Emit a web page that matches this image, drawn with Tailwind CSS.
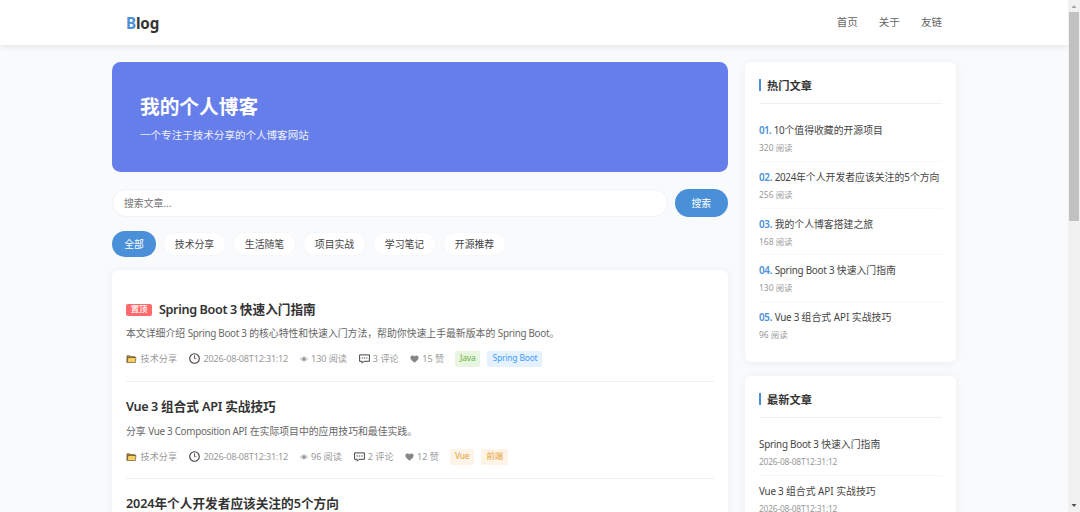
<!doctype html>
<html lang="zh-CN">
<head>
  <meta charset="UTF-8">
  <meta name="viewport" content="width=device-width, initial-scale=1.0">
  <title>Blog</title>
  <script src="https://cdn.jsdelivr.net/npm/@tailwindcss/browser@4"></script>
</head>
<body class="flex h-[512px] overflow-hidden bg-[#f8fafc] font-['Noto_Sans','Noto_Sans_CJK_SC',sans-serif] text-[9.86px] text-[#333]">

  <!-- Icons -->
  <svg class="hidden">
    <symbol id="icon-folder" viewBox="0 0 10 8">
      <path d="M.5 7.4V.9h3l.8.9h4.2v1" fill="#e0a838" stroke="#4a4026" stroke-width=".8"/>
      <path d="M.6 7.5 1.5 2.5h8L8.8 7.5Z" fill="#f9cf5f" stroke="#4a4026" stroke-width=".6"/>
    </symbol>
    <symbol id="icon-clock" viewBox="0 0 11 11">
      <circle cx="5.5" cy="5.5" r="4.8" fill="#fff" stroke="#3c3c3c" stroke-width="1.1"/>
      <path d="M5.5 2.4v3.3" stroke="#444" stroke-width=".9"/>
      <path d="M5.3 5.7h2.2" stroke="#d05a5a" stroke-width=".9"/>
    </symbol>
    <symbol id="icon-eye" viewBox="0 0 8 6">
      <path d="M.4 3Q4-1.2 7.6 3 4 7 .4 3Z" fill="#ddd" stroke="#aaa" stroke-width=".7"/>
      <circle cx="4" cy="2.9" r="1.5" fill="#8f8f8f"/>
    </symbol>
    <symbol id="icon-comment" viewBox="0 0 11 10">
      <path d="M.6.9h9.8v6.4H5L3.2 9.2V7.3H.6Z" fill="#fff" stroke="#3c3c3c" stroke-width=".95"/>
      <path d="M2.6 3.6h1.2v1H2.6ZM4.9 3.6h1.2v1H4.9ZM7.2 3.6h1.2v1H7.2Z" fill="#3c3c3c"/>
    </symbol>
    <symbol id="icon-heart" viewBox="0 0 9 8">
      <path d="M4.5 7.7C2.2 6 .4 4.6.4 2.6.4 1.2 1.3.4 2.5.4c.9 0 1.6.5 2 1.2.4-.7 1.1-1.2 2-1.2 1.2 0 2.1.8 2.1 2.2C8.6 4.6 6.800 6 4.500 7.700Z" fill="#858585"/>
    </symbol>
  </svg>

  <div class="flex w-[1068px] shrink-0 flex-col">
    <header class="z-10 h-[45px] shrink-0 bg-white shadow-[0_1px_7px_rgba(0,0,0,0.1)]">
      <div class="mx-auto flex h-full w-[844px] items-center justify-between px-[14px]">
        <a href="#" class="pt-[2px] text-[15.2px] font-bold leading-none tracking-[-0.01em]"><span class="text-[#4a90d9]">B</span>log</a>
        <nav class="flex gap-[21px] pt-px text-[10.56px] text-[#666]">
          <a href="#">首页</a>
          <a href="#">关于</a>
          <a href="#">友链</a>
        </nav>
      </div>
    </header>

    <div class="mx-auto flex w-[844px] gap-[17px] pt-[17px]">
      <main class="w-[616px] shrink-0">
        <section class="h-[110px] rounded-[8.5px] bg-[#667eea] px-7 pt-[31px] text-white">
          <h1 class="text-[19.7px] font-bold leading-[28px]">我的个人博客</h1>
          <p class="mt-[6px] text-[10.56px] leading-4 opacity-90">一个专注于技术分享的个人博客网站</p>
        </section>

        <form class="mt-[17px] flex h-[28px] gap-[6.5px]">
          <input type="text" placeholder="搜索文章..." class="min-w-0 flex-1 rounded-full border border-[#f0f2f5] bg-white px-[11px] placeholder:text-[#757575]">
          <button type="button" class="w-[53.5px] rounded-full bg-[#4a90d9] text-white">搜索</button>
        </form>

        <div class="mt-[14px] flex h-[26px] items-center gap-[7px] text-[#444]">
          <button class="h-[26px] w-[44px] rounded-full bg-[#4a90d9] text-white">全部</button>
          <button class="h-6 w-[63px] rounded-full border border-[#f5f7f9] bg-white">技术分享</button>
          <button class="h-6 w-[63px] rounded-full border border-[#f5f7f9] bg-white">生活随笔</button>
          <button class="h-6 w-[63px] rounded-full border border-[#f5f7f9] bg-white">项目实战</button>
          <button class="h-6 w-[63px] rounded-full border border-[#f5f7f9] bg-white">学习笔记</button>
          <button class="h-6 w-[63px] rounded-full border border-[#f5f7f9] bg-white">开源推荐</button>
        </div>

        <section class="mt-[13px] h-[300px] rounded-[6px] bg-white px-[14px] pt-[14px] shadow-[0_1px_8px_rgba(0,0,0,0.06)]">
          <article class="h-[98px] border-b border-[#f0f0f0] pt-[15px]">
            <h2 class="flex h-5 items-center text-[12.67px] font-semibold">
              <span class="mr-[7px] mt-px flex h-3 w-[26px] items-center justify-center rounded-[2px] bg-[#ff6b6b] text-[8.4px] font-medium text-white">置顶</span>
              <span class="tracking-[-0.03em]">Spring Boot 3&nbsp;</span><span class="font-bold">快速入门指南</span>
            </h2>
            <p class="mt-[6px] h-4 leading-4 text-[#666]">本文详细介绍 <span class="tracking-[-0.03em]">Spring Boot 3</span> 的核心特性和快速入门方法，帮助你快速上手最新版本的 <span class="tracking-[-0.03em]">Spring Boot</span>。</p>
            <div class="mt-[9px] flex h-[17px] items-center text-[9.15px] text-[#999]">
              <svg class="mr-[3.5px] h-2 w-[11px]"><use href="#icon-folder"/></svg><span>技术分享</span>
              <svg class="ml-3 mr-[3.5px] size-[11px]"><use href="#icon-clock"/></svg><span class="tracking-[-0.025em]">2026-08-08T12:31:12</span>
              <svg class="ml-3 mr-[3px] h-[6px] w-2"><use href="#icon-eye"/></svg><span class="tracking-[-0.01em]">130 阅读</span>
              <svg class="ml-3 mr-[3px] h-[10px] w-[11px]"><use href="#icon-comment"/></svg><span>3 评论</span>
              <svg class="ml-[11.5px] mr-[3px] h-2 w-[9px]"><use href="#icon-heart"/></svg><span>15 赞</span>
              <span class="ml-[11px] flex h-[16px] items-center rounded-[2px] bg-[#e8f5e1] px-[5px] text-[8.45px] tracking-[-0.02em] text-[#67b03a]">Java</span>
              <span class="ml-[7px] flex h-[16px] items-center rounded-[2px] bg-[#e6f1fe] px-[5px] text-[8.45px] tracking-[-0.02em] text-[#409eff]">Spring Boot</span>
            </div>
          </article>

          <article class="h-[97px] border-b border-[#f0f0f0] pt-[14px]">
            <h2 class="flex h-5 items-center text-[12.67px] font-semibold">
              <span class="tracking-[-0.03em]">Vue 3&nbsp;</span><span class="font-bold">组合式</span><span class="tracking-[-0.02em]">&nbsp;API&nbsp;</span><span class="font-bold">实战技巧</span>
            </h2>
            <p class="mt-[7px] h-4 leading-4 text-[#666]">分享 <span class="tracking-[-0.03em]">Vue 3 Composition API</span> 在实际项目中的应用技巧和最佳实践。</p>
            <div class="mt-[9px] flex h-[17px] items-center text-[9.15px] text-[#999]">
              <svg class="mr-[3.5px] h-2 w-[11px]"><use href="#icon-folder"/></svg><span>技术分享</span>
              <svg class="ml-3 mr-[3.5px] size-[11px]"><use href="#icon-clock"/></svg><span class="tracking-[-0.025em]">2026-08-08T12:31:12</span>
              <svg class="ml-3 mr-[3px] h-[6px] w-2"><use href="#icon-eye"/></svg><span class="tracking-[-0.01em]">96 阅读</span>
              <svg class="ml-3 mr-[3px] h-[10px] w-[11px]"><use href="#icon-comment"/></svg><span>2 评论</span>
              <svg class="ml-[11.5px] mr-[3px] h-2 w-[9px]"><use href="#icon-heart"/></svg><span>12 赞</span>
              <span class="ml-[11px] flex h-[16px] items-center rounded-[2px] bg-[#fdf3e6] px-[5px] text-[8.45px] tracking-[-0.02em] text-[#e6a23c]">Vue</span>
              <span class="ml-[7px] flex h-[16px] items-center rounded-[2px] bg-[#fdf3e6] px-[5px] text-[8.45px] text-[#e6a23c]">前端</span>
            </div>
          </article>

          <article class="pt-[14px]">
            <h2 class="flex h-5 items-center text-[12.67px] font-semibold">
              <span class="tracking-[-0.01em]">2024</span><span class="font-bold">年个人开发者应该关注的</span><span>5</span><span class="font-bold">个方向</span>
            </h2>
          </article>
        </section>
      </main>

      <aside class="flex w-[211px] shrink-0 flex-col gap-[14px]">
        <section class="h-[300px] rounded-[6px] bg-white px-[14px] pt-[14px] shadow-[0_1px_8px_rgba(0,0,0,0.06)]">
          <h3 class="flex h-[28px] items-start border-b border-[#f0f0f0] text-[11.26px] font-bold">
            <span class="mr-[6px] mt-[3px] h-3 w-[2px] bg-[#4a90d9]"></span><span class="leading-[19px]">热门文章</span>
          </h3>
          <ul class="pt-[11px] text-[#444]">
            <li class="h-[47px] border-b border-[#f9f9f9] pt-[7px]">
              <p class="h-4 leading-4"><span class="font-semibold tracking-[-0.06em] text-[#4a90d9]">01.</span> <span class="tracking-[-0.03em]">10</span>个值得收藏的开源项目</p>
              <p class="mt-[2px] text-[8.45px] leading-4 text-[#999]">320 阅读</p>
            </li>
            <li class="h-[47px] border-b border-[#f9f9f9] pt-[7px]">
              <p class="h-4 leading-4"><span class="font-semibold tracking-[-0.03em] text-[#4a90d9]">02.</span> <span class="tracking-[-0.03em]">2024</span>年个人开发者应该关注的5个方向</p>
              <p class="mt-[2px] text-[8.45px] leading-4 text-[#999]">256 阅读</p>
            </li>
            <li class="h-[46px] border-b border-[#f7f7f7] pt-[7px]">
              <p class="h-4 leading-4"><span class="font-semibold tracking-[-0.03em] text-[#4a90d9]">03.</span> 我的个人博客搭建之旅</p>
              <p class="mt-[2px] text-[8.45px] leading-4 text-[#999]">168 阅读</p>
            </li>
            <li class="h-[47px] border-b border-[#f7f7f7] pt-[7px]">
              <p class="h-4 leading-4"><span class="font-semibold tracking-[-0.03em] text-[#4a90d9]">04.</span> <span class="tracking-[-0.025em]">Spring Boot 3</span> 快速入门指南</p>
              <p class="mt-[2px] text-[8.45px] leading-4 text-[#999]">130 阅读</p>
            </li>
            <li class="h-[47px] pt-[7px]">
              <p class="h-4 leading-4"><span class="font-semibold tracking-[-0.03em] text-[#4a90d9]">05.</span> <span class="tracking-[-0.025em]">Vue 3</span> 组合式 <span>API</span> 实战技巧</p>
              <p class="mt-[2px] text-[8.45px] leading-4 text-[#999]">96 阅读</p>
            </li>
          </ul>
        </section>

        <section class="h-[300px] rounded-[6px] bg-white px-[14px] pt-[14px] shadow-[0_1px_8px_rgba(0,0,0,0.06)]">
          <h3 class="flex h-[28px] items-start border-b border-[#f0f0f0] text-[11.26px] font-bold">
            <span class="mr-[6px] mt-[3px] h-3 w-[2px] bg-[#4a90d9]"></span><span class="leading-[19px]">最新文章</span>
          </h3>
          <ul class="pt-[11px] text-[#444]">
            <li class="h-[47px] border-b border-[#f7f7f7] pt-[7px]">
              <p class="h-4 leading-4"><span class="tracking-[-0.025em]">Spring Boot 3</span> 快速入门指南</p>
              <p class="mt-[2px] text-[8.45px] leading-4 tracking-[-0.025em] text-[#999]">2026-08-08T12:31:12</p>
            </li>
            <li class="h-[47px] pt-[7px]">
              <p class="h-4 leading-4"><span class="tracking-[-0.025em]">Vue 3</span> 组合式 <span>API</span> 实战技巧</p>
              <p class="mt-[2px] text-[8.45px] leading-4 tracking-[-0.025em] text-[#999]">2026-08-08T12:31:12</p>
            </li>
          </ul>
        </section>
      </aside>
    </div>
  </div>

  <!-- Scrollbar -->
  <div class="z-20 flex w-3 shrink-0 flex-col items-center bg-[#f1f1f1]">
    <svg class="h-3 w-3 shrink-0" viewBox="0 0 12 12"><path d="M3.5 8 6 5l2.5 3Z" fill="#a3a3a3"/></svg>
    <div class="h-[209px] w-[10px] bg-[#c1c1c1]"></div>
    <svg class="mt-auto h-3 w-3 shrink-0" viewBox="0 0 12 12"><path d="M3.5 4 6 7l2.5-3Z" fill="#505050"/></svg>
  </div>
</body>
</html>
